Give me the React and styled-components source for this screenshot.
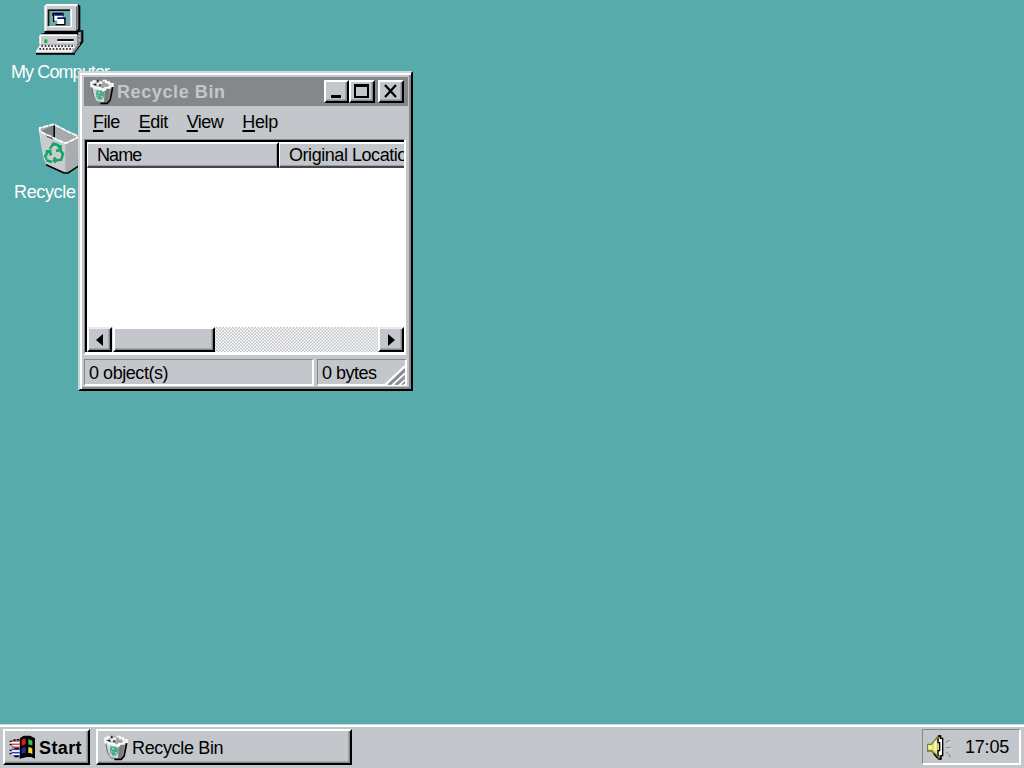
import styled, { createGlobalStyle, css } from "styled-components";

const GlobalStyle = createGlobalStyle`
  * {
    box-sizing: border-box;
  }

  body {
    margin: 0;
    overflow: hidden;
    font-family: "Liberation Sans", Arial, sans-serif;
    font-size: 18px;
    line-height: 20px;
    color: #000;
  }
`;

const face = "#c3c6ca";

// raised edge shared by every button
const raised = css`
  background: ${face};
  border: 2px solid;
  border-color: #fff #000 #000 #fff;
  box-shadow: inset -1.5px -1.5px 0 #85888c;
`;

// Desktop
const Desktop = styled.div`
  position: relative;
  display: flex;
  flex-direction: column;
  width: 100vw;
  height: 100vh;
  background: #57abab;
`;

const Workspace = styled.main`
  position: relative;
  flex: 1;
`;

// Shortcut
const Shortcut = styled.div`
  position: absolute;
  left: ${({ $x }) => $x}px;
  top: ${({ $y }) => $y}px;
  display: flex;
  flex-direction: column;
  align-items: flex-start;
  width: 120px;
`;

const ShortcutIcon = styled.svg`
  display: block;
  width: 56px;
  height: 56px;
  margin-left: 32px;
`;

const Text = styled.span`
  white-space: nowrap;
  letter-spacing: ${({ $gap }) => $gap || -0.35}px;
`;

const ShortcutName = styled(Text)`
  margin-top: 4px;
  margin-left: ${({ $indent }) => $indent}px;
  color: #fff;
`;

// Window
const Window = styled.section`
  position: absolute;
  left: 78px;
  top: 71px;
  display: flex;
  flex-direction: column;
  width: 335px;
  height: 320px;
  padding: 3px 3px 1px 4px;
  background: ${face};
  border: 2px solid;
  border-color: #d3d6da #000 #000 #d0d3d7;
  box-shadow: inset 2px 2px 0 #fff, inset -2px -2px 0 #85888c;
`;

const TitleBar = styled.header`
  display: flex;
  align-items: center;
  height: 29px;
  margin-top: 1px;
  padding: 0 4px 0 6px;
  background: #85888a;
  color: #c3c6ca;
  font-weight: bold;
`;

const TitleText = styled(Text)`
  flex: 1;
  margin-left: 3px;
`;

const SmallIcon = styled.svg`
  display: block;
  flex: none;
  width: ${({ $w }) => $w || 24}px;
  height: ${({ $h }) => $h || 26}px;
`;

const CaptionButton = styled.div`
  ${raised}
  width: ${({ $w }) => $w || 26}px;
  height: 23px;
  margin-left: ${({ $space }) => $space || 0}px;

  svg {
    display: block;
    width: 100%;
    height: 100%;
  }
`;

const MenuBar = styled.nav`
  display: flex;
  gap: 19px;
  height: 33px;
  padding: 6px 0 0 9px;

  u {
    text-decoration-thickness: 2px;
    text-underline-offset: 2px;
  }
`;

// ListView
const ListView = styled.div`
  display: flex;
  flex-direction: column;
  width: 322px;
  height: 216px;
  background: #fff;
  border: 1px solid;
  border-color: #85888c #fff #fff #85888c;
  border-right-width: 2px;
  border-bottom-width: 3px;
`;

const ListBody = styled.div`
  display: flex;
  flex-direction: column;
  flex: 1;
  min-height: 0;
  border-left: 2px solid #000;
  border-top: 2px solid #000;
`;

const ColumnRow = styled.div`
  display: flex;
  height: 26px;
  overflow: hidden;
`;

const Column = styled.div`
  flex: none;
  width: ${({ $w }) => $w}px;
  padding: 1px 0 0 ${({ $pad }) => $pad}px;
  overflow: hidden;
  background: ${face};
  border: solid;
  border-width: 2px 2px 2px 1px;
  border-color: #fff #000 #45474a #fff;
  box-shadow: inset -1px -1px 0 #9a9da1;
`;

const EmptyArea = styled.div`
  flex: 1;
`;

const ScrollBar = styled.div`
  display: flex;
  height: 25px;
  background: repeating-conic-gradient(#c3c6ca 0 25%, #fafafa 0 50%) 0 0 / 3.2px 3.2px;
`;

const ScrollButton = styled.div`
  ${raised}
  display: flex;
  align-items: center;
  justify-content: center;
  width: ${({ $w }) => $w}px;
  border-top-color: #e8eaec;
`;

const ScrollThumb = styled.div`
  ${raised}
  width: 102px;
  margin: 0 auto 0 1px;
`;

// StatusBar
const StatusBar = styled.footer`
  display: flex;
  gap: 3px;
  margin-top: 4px;
  width: 323px;
`;

const StatusPane = styled.div`
  display: flex;
  align-items: flex-end;
  justify-content: space-between;
  width: ${({ $w }) => $w}px;
  height: 27px;
  padding-left: 4px;
  padding-bottom: 1px;
  border: 1px solid;
  border-width: 1px 2px 2px 1px;
  border-color: #85888c #fff #fff #85888c;

  svg {
    margin-bottom: -2px;
  }
`;

// Taskbar
const Taskbar = styled.footer`
  display: flex;
  align-items: flex-start;
  height: 44px;
  padding: 3px 3px 0 3px;
  background: ${face};
  border-top: 1px solid #c8dada;
  box-shadow: inset 0 2px 0 #fff;
`;

const TaskButton = styled.div`
  ${raised}
  display: flex;
  align-items: center;
  gap: ${({ $space }) => $space}px;
  width: ${({ $w }) => $w}px;
  height: 36px;
  margin: 1px 6px 0 0;
  padding-left: ${({ $pad }) => $pad}px;
  padding-top: 1px;
  font-weight: ${({ $bold }) => ($bold ? "bold" : "normal")};
`;

const Tray = styled.div`
  display: flex;
  align-items: center;
  justify-content: space-between;
  width: 99px;
  height: 36px;
  margin: 1px 0 0 auto;
  padding: 1px 10px 0 3px;
  border: 1px solid;
  border-width: 1.6px 2px 2px 1.6px;
  border-color: #85888c #fff #fff #85888c;
`;

const ComputerIcon = () => (
  <ShortcutIcon viewBox="100 8 168 168">
    {/* monitor */}
    <path d="M139 14h96l7 7v70l-9 11H135V18z" fill="#000" />
    <path d="M139 14h96v5l-5 5v70h-95V18z" fill="#c8cbcf" />
    <path d="M134 18h5v-4h92v5h-91v75h-6z" fill="#fff" />
    <path d="M232 19h4v70l-6 5V25z" fill="#85888c" />
    <path d="M144 30h68v50h-68z" fill="#111" />
    <path d="M149 35h63v44h-63z" fill="#6eaaa9" />
    <path d="M212 30h5v54h-68v-5h63z" fill="#fff" />
    <path d="M158 40h34v10h-34zM160 44h5v24h-5z" fill="#000" />
    <path d="M164 44h24v20h-24z" fill="#fff" />
    <path d="M164 44h24v5h-24zM173 54h24v6h-24z" fill="#101080" />
    <path d="M173 59h20v15h-20z" fill="#fff" />
    <path d="M168 74h28v4h-28zM194 55h4v21h-4z" fill="#000" />
    {/* case */}
    <path d="M123 104l10-3h98l11-8h9v35l-25 33v5H109v-10l11-20z" fill="#000" />
    <path d="M120 109h112v27H120z" fill="#c8cbcf" />
    <path d="M123 105h109v5H124v25h-5v-26z" fill="#fff" />
    <path d="M232 108l13-13v31l-13 13z" fill="#85888c" />
    <path d="M236 101h5M237 111h4M237 122h4" stroke="#c3c6ca" strokeWidth="4" />
    <path d="M134 120h9v11h-9z" fill="#18b748" />
    <path d="M173 119h49v6h-49z" fill="#111" />
    <path d="M173 125h49v4h-49z" fill="#fff" />
    {/* keyboard */}
    <path d="M120 136h112v3l-15 21H109v-6z" fill="#f1f1f1" />
    <path d="M125 140h102M119 149h102" stroke="#111" strokeWidth="5" strokeDasharray="5 5" />
    <path d="M226 145l15-15v6l-18 25h-6z" fill="#85888c" />
  </ShortcutIcon>
);

const BinIcon = () => (
  <ShortcutIcon viewBox="108 40 168 168">
    <path d="M118 58l42-12 78 38-7 97-27 13h-12l-54-23z" fill="#aaadb0" />
    <path d="M119 62l77 40v88l-57-23z" fill="#c9cccf" />
    <path d="M124 66l36-17v40l-17-8z" fill="#818487" />
    <path d="M165 52l58 30-25 20-33-12z" fill="#a8abad" />
    <path d="M160 48h5v40h-5z" fill="#000" />
    <path d="M140 75l20 10v8l-20-8z" fill="#5d6062" />
    <path d="M238 87v84l-34 22h-12l-54-25" fill="none" stroke="#000" strokeWidth="5" />
    <path d="M119 67v-9l41-11 22 10 20 11 20 9 15 8-19 9-21 10-22-9-25-13-28-12z" fill="none" stroke="#fff" strokeWidth="5" strokeDasharray="17 2" />
    <path d="M119 68l5 33 9 49 7 13" fill="none" stroke="#d5d9da" strokeWidth="4" />
    <path d="M150 122l10-17 13 4 8 11M181 109l1 16-14 1M137 128h13l3 12M144 129l-8 13 7 14 13 4M160 152l8 9M161 155l22-2 6-17-7-10M164 146v16" fill="none" stroke="#17a269" strokeWidth="8" />
    <path d="M152 121l8-6 9 3M139 144l5 9M174 151l9-7" fill="none" stroke="#d9e3de" strokeWidth="2" />
  </ShortcutIcon>
);

const SmallBin = (props) => (
  <SmallIcon viewBox="42 56 74 78" {...props}>
    <path d="M45 68l18-9 36 3 14 12-7 48-12 10-28-3-10-12z" fill="#8c9092" />
    <path d="M48 74l39 9-2 44-22-5-9-10z" fill="#d0d8d5" />
    <path d="M88 83l16-6-6 43-11 9z" fill="#777b7e" />
    <path d="M52 66l14-4 28 4 10 7-18 7-26-6z" fill="#a0a3a5" />
    <path d="M43 66h10v-4h8M81 60h10v5h10v5h11v7h-10v5H89v5H72v-5H57v-5H46v-9" fill="none" stroke="#fff" strokeWidth="6" />
    <path d="M62 66h8v-4h10v8h-9v6h-8z" fill="#eceeef" />
    <path d="M66 57v8M54 72h5v4M73 71v6" fill="none" stroke="#18201d" strokeWidth="4" />
    <path d="M48 84l5 24 5 8" fill="none" stroke="#626866" strokeWidth="3" />
    <path d="M112 80l-3 15-5 25-9 10H74" fill="none" stroke="#000" strokeWidth="5" />
    <path d="M62 90h18v5h5v17h-5v6H66v-6h-5V93h1z" fill="#4aaa84" />
    <path d="M67 95h6v4h-6zM64 105h4v4h-4zM76 107h5v4h-5z" fill="#c2ded2" />
  </SmallIcon>
);

const StartLogo = () => (
  <SmallIcon $w={27} $h={25} viewBox="28 58 81 75">
    <path d="M62 66l10-6h20l8 5 6 3v61l-11-5H82l-22 5V70z" fill="#000" />
    <path d="M66 74l5-5h7v17l-6 1-6 4z" fill="#d0232c" />
    <path d="M86 69l7 5h5v16l-6-3h-6z" fill="#42b951" />
    <path d="M66 99l6-4h6v17h-7l-5 4z" fill="#202ca4" />
    <path d="M86 95h6l6 4v17l-6-4h-6z" fill="#f1da39" />
    <path d="M36 76h24M36 86h24M36 94h24" stroke="#d54f63" strokeWidth="5" />
    <path d="M36 102h24M36 111h24M41 120h19" stroke="#3642ae" strokeWidth="5" />
    <path d="M36 81h24M41 90h19M36 106h24M36 116h24" stroke="#fff" strokeWidth="4" />
    <path d="M30 77h6M30 87h6M30 104h6M30 114h6M41 73h7M51 72h8M44 98h14M45 123h12" stroke="#000" strokeWidth="4" />
  </SmallIcon>
);

const SpeakerIcon = () => (
  <SmallIcon $w={27} $h={27} viewBox="78 54 81 81">
    <path d="M81 83h12l22-26h8v9h6v52h-5v13h-9l-21-24H81z" fill="#777a43" />
    <path d="M84 87h11l18-21v52l-17-16H84z" fill="#e5e66c" />
    <path d="M88 89h6v8h-6zM104 75h5v27h-5z" fill="#fffed0" />
    <path d="M115 67h11v51h-11z" fill="#fff" />
    <path d="M114 60h8v7h6v52h-5v10h-8M114 67v13h5v24h-5v15M101 113l12 14" fill="none" stroke="#000" strokeWidth="4" />
    <path d="M137 79h5v-5h9M138 95h15M138 109h5v6h5v7h5" fill="none" stroke="#8b8e91" strokeWidth="3" />
    <path d="M142 83h5v-5h6M142 99h13M142 113h5" fill="none" stroke="#e1e4e7" strokeWidth="2" />
  </SmallIcon>
);

const Arrow = ({ right }) => (
  <svg width="8" height="14" viewBox="0 0 8 14">
    <path d={right ? "M1 1l7 6-7 6z" : "M7 1L0 7l7 6z"} />
  </svg>
);

const SizeGrip = () => (
  <svg width="20" height="20" viewBox="0 0 20 20">
    <path d="M0 20L20 1M7 20L20 8M14 20L20 14" stroke="#fff" strokeWidth="2" />
    <path d="M3 20L20 4M5 20L20 6M10 20L20 11M12 20L20 13M17 20L20 17" stroke="#85888c" strokeWidth="1.3" />
  </svg>
);

const menus = [
  { label: "File", gap: -0.6 },
  { label: "Edit", gap: -0.5 },
  { label: "View", gap: -0.5 },
  { label: "Help", gap: -0.4 },
];

const App = () => {
  return (
    <Desktop>
      <GlobalStyle />
      <Workspace>
        <Shortcut $x={1} $y={2}>
          <ComputerIcon />
          <ShortcutName $indent={10} $gap={-0.9}>
            My Computer
          </ShortcutName>
        </Shortcut>
        <Shortcut $x={4} $y={122}>
          <BinIcon />
          <ShortcutName $indent={10}>Recycle Bin</ShortcutName>
        </Shortcut>

        <Window>
          <TitleBar>
            <SmallBin />
            <TitleText $gap={0.6}>Recycle Bin</TitleText>
            <CaptionButton $w={25}>
              <svg viewBox="0 0 21 19">
                <path d="M5 13h10v3H5z" />
              </svg>
            </CaptionButton>
            <CaptionButton>
              <svg viewBox="0 0 22 19">
                <path d="M3 2h15v14H3zM5 5v9h11V5z" fillRule="evenodd" />
              </svg>
            </CaptionButton>
            <CaptionButton $space={3}>
              <svg viewBox="0 0 22 19">
                <path d="M5 3l11 12M16 3L5 15" stroke="#000" strokeWidth="2.3" />
              </svg>
            </CaptionButton>
          </TitleBar>
          <MenuBar>
            {menus.map(({ label, gap }) => (
              <Text key={label} $gap={gap}>
                <u>{label[0]}</u>
                {label.slice(1)}
              </Text>
            ))}
          </MenuBar>
          <ListView>
            <ListBody>
              <ColumnRow>
                <Column $w={192} $pad={9}>
                  <Text $gap={-0.9}>Name</Text>
                </Column>
                <Column $w={190} $pad={9}>
                  <Text $gap={-0.45}>Original Location</Text>
                </Column>
              </ColumnRow>
              <EmptyArea />
              <ScrollBar>
                <ScrollButton $w={25}>
                  <Arrow />
                </ScrollButton>
                <ScrollThumb />
                <ScrollButton $w={26}>
                  <Arrow right />
                </ScrollButton>
              </ScrollBar>
            </ListBody>
          </ListView>
          <StatusBar>
            <StatusPane $w={230}>
              <Text $gap={-0.45}>0 object(s)</Text>
            </StatusPane>
            <StatusPane $w={90}>
              <Text $gap={-0.5}>0 bytes</Text>
              <SizeGrip />
            </StatusPane>
          </StatusBar>
        </Window>
      </Workspace>

      <Taskbar>
        <TaskButton $w={87} $pad={4} $space={3} $bold>
          <StartLogo />
          <Text $gap={0.4}>Start</Text>
        </TaskButton>
        <TaskButton $w={256} $pad={6} $space={4}>
          <SmallBin />
          <Text>Recycle Bin</Text>
        </TaskButton>
        <Tray>
          <SpeakerIcon />
          <Text $gap={-0.2}>17:05</Text>
        </Tray>
      </Taskbar>
    </Desktop>
  );
};

export default App;
